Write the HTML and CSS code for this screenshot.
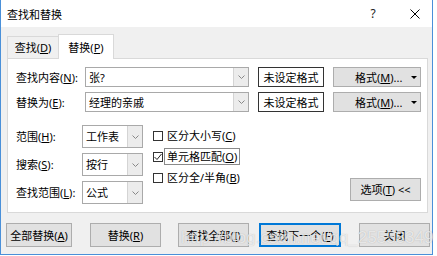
FILE: index.html
```html
<!DOCTYPE html>
<html lang="zh-CN">
<head>
    <meta charset="UTF-8">
    <meta name="viewport" content="width=device-width, initial-scale=1.0">
    <title>查找和替换</title>
    <link rel="stylesheet" href="styles.css">
</head>
<body>
    <div class="window">
        <div class="titlebar">
            <span class="title">查找和替换</span>
            <span class="help">?</span>
            <span class="close">
                <svg width="10" height="10" viewBox="0 0 10 10"><path d="M0.5 0.5 L9.5 9.5 M9.5 0.5 L0.5 9.5" stroke="#000" stroke-width="1"/></svg>
            </span>
        </div>
        <div class="client">
            <div class="tabs">
                <div class="tab">查找(<u>D</u>)</div>
                <div class="tab active">替换(<u>P</u>)</div>
            </div>
            <div class="panel">
                <div class="find-grid">
                    <label class="lbl">查找内容(<u>N</u>):</label>
                    <div class="combo"><span class="val">张?</span><span class="drop"><svg width="7" height="4" viewBox="0 0 7 4"><path d="M0.5 0.5 L3.5 3.5 L6.5 0.5" fill="none" stroke="#888"/></svg></span></div>
                    <div class="fmt-box">未设定格式</div>
                    <button class="btn fmt">格式(<u>M</u>)...<span class="tri"></span></button>

                    <label class="lbl">替换为(<u>E</u>):</label>
                    <div class="combo"><span class="val">经理的亲戚</span><span class="drop"><svg width="7" height="4" viewBox="0 0 7 4"><path d="M0.5 0.5 L3.5 3.5 L6.5 0.5" fill="none" stroke="#888"/></svg></span></div>
                    <div class="fmt-box">未设定格式</div>
                    <button class="btn fmt">格式(<u>M</u>)...<span class="tri"></span></button>
                </div>

                <div class="options">
                    <div class="opt-grid">
                        <label class="lbl">范围(<u>H</u>):</label>
                        <div class="combo"><span class="val">工作表</span><span class="drop"><svg width="7" height="4" viewBox="0 0 7 4"><path d="M0.5 0.5 L3.5 3.5 L6.5 0.5" fill="none" stroke="#888"/></svg></span></div>
                        <label class="lbl">搜索(<u>S</u>):</label>
                        <div class="combo"><span class="val">按行</span><span class="drop"><svg width="7" height="4" viewBox="0 0 7 4"><path d="M0.5 0.5 L3.5 3.5 L6.5 0.5" fill="none" stroke="#888"/></svg></span></div>
                        <label class="lbl">查找范围(<u>L</u>):</label>
                        <div class="combo"><span class="val">公式</span><span class="drop"><svg width="7" height="4" viewBox="0 0 7 4"><path d="M0.5 0.5 L3.5 3.5 L6.5 0.5" fill="none" stroke="#888"/></svg></span></div>
                    </div>
                    <div class="checks">
                        <div class="check"><span class="box"></span><span class="txt">区分大小写(<u>C</u>)</span></div>
                        <div class="check"><span class="box"><svg width="8" height="8" viewBox="0 0 8 8"><path d="M0.5 4 L3 6.5 L7.5 1" fill="none" stroke="#222" stroke-width="1"/></svg></span><span class="txt focus">单元格匹配(<u>O</u>)</span></div>
                        <div class="check"><span class="box"></span><span class="txt">区分全/半角(<u>B</u>)</span></div>
                    </div>
                    <button class="btn opt-btn">选项(<u>T</u>) &lt;&lt;</button>
                </div>
            </div>

            <div class="actions">
                <button class="btn w66">全部替换(<u>A</u>)</button>
                <button class="btn w71 ml18">替换(<u>R</u>)</button>
                <button class="btn w71 ml17">查找全部(<u>I</u>)</button>
                <button class="btn w82 ml10 default">查找下一个(<u>F</u>)</button>
                <button class="btn w71 ml18">关闭</button>
            </div>
            <div class="watermark">http://blog.csdn.net/qq_25558349</div>
        </div>
    </div>
</body>
</html>
```

FILE: styles.css
```css
body {
    margin: 0;
    background: #fff;
    font-family: "Noto Sans", "Noto Sans CJK SC", sans-serif;
    font-size: 11px;
    color: #000;
}

.window {
    width: 433px;
    height: 255px;
    box-sizing: border-box;
    border: 1px solid #4a90d9;
    border-top: none;
    display: flex;
    flex-direction: column;
}

.titlebar {
    height: 27px;
    display: flex;
    align-items: center;
    padding-left: 6px;
    background: #fff;
}

.help {
    margin-left: auto;
    width: 20px;
    text-align: center;
    font-size: 12px;
    color: #222;
}

.close {
    margin-left: 27px;
    margin-right: 12px;
    width: 10px;
    height: 10px;
    display: flex;
}

.client {
    position: relative;
    flex: 1;
    background: #f0f0f0;
}

.tabs {
    display: flex;
    align-items: flex-end;
    padding: 7px 0 0 6px;
    height: 24px;
}

.tab {
    height: 22px;
    box-sizing: border-box;
    border: 1px solid #d9d9d9;
    border-bottom: none;
    width: 52px;
    display: flex;
    align-items: center;
    justify-content: center;
    line-height: 1;
}

.tab.active {
    height: 25px;
    width: 56px;
    margin-bottom: -1px;
    margin-left: -1px;
    background: #fff;
    position: relative;
    z-index: 1;
}

.panel {
    margin: 0 4px 0 6px;
    height: 155px;
    box-sizing: border-box;
    background: #fff;
    border: 1px solid #d9d9d9;
    padding: 8px 0 0 8px;
}

.find-grid {
    display: grid;
    grid-template-columns: 60px 164px 66px 88px;
    grid-auto-rows: 20px;
    column-gap: 9px;
    row-gap: 5px;
    align-items: center;
}

.lbl {
    line-height: 1;
    white-space: nowrap;
}

.combo {
    height: 100%;
    box-sizing: border-box;
    border: 1px solid #a9a9a9;
    display: flex;
    align-items: center;
    background: #fff;
}

.combo .val {
    flex: 1;
    padding-left: 3px;
    line-height: 1;
}

.combo .drop {
    width: 15px;
    height: 100%;
    box-sizing: border-box;
    border-left: 1px solid #d4d4d4;
    background: #ececec;
    display: flex;
    align-items: center;
    justify-content: center;
}

.fmt-box {
    height: 100%;
    box-sizing: border-box;
    border: 1px solid #333;
    display: flex;
    align-items: center;
    justify-content: center;
    line-height: 1;
}

.btn {
    font: inherit;
    color: #000;
    background: #e1e1e1;
    border: 1px solid #adadad;
    padding: 0;
    height: 24px;
    line-height: 1;
}

.fmt {
    height: 100%;
    display: flex;
    align-items: center;
    padding: 0 3px 0 21px;
}

.tri {
    margin-left: auto;
    width: 0;
    height: 0;
    border-left: 3px solid transparent;
    border-right: 3px solid transparent;
    border-top: 3px solid #000;
}

.options {
    display: flex;
    margin-top: 13px;
}

.opt-grid {
    display: grid;
    grid-template-columns: 66px 61px;
    grid-auto-rows: 23px;
    row-gap: 5px;
    align-items: center;
}

.checks {
    margin-left: 10px;
    display: flex;
    flex-direction: column;
}

.check {
    height: 21px;
    display: flex;
    align-items: center;
}

.box {
    width: 10px;
    height: 10px;
    box-sizing: border-box;
    border: 1px solid #333;
    margin-right: 1px;
    display: flex;
    align-items: center;
    justify-content: center;
}

.txt {
    padding: 2px 2px;
    border: 1px solid transparent;
    line-height: 1;
}

.txt.focus {
    border-color: #8a8a8a;
}

.opt-btn {
    margin-left: auto;
    margin-right: 6px;
    align-self: flex-end;
    margin-bottom: 3px;
    width: 71px;
    height: 23px;
}

.actions {
    display: flex;
    margin-top: 10px;
    padding-left: 5px;
}

.w66 { width: 66px; }
.w71 { width: 71px; }
.w82 { width: 82px; }
.ml10 { margin-left: 10px; }
.ml17 { margin-left: 17px; }
.ml18 { margin-left: 18px; }

.default {
    border-color: #0078d7;
    box-shadow: inset 0 0 0 1px #0078d7;
}

.watermark {
    position: absolute;
    left: 180px;
    top: 201px;
    font-family: "Liberation Sans", sans-serif;
    font-size: 17px;
    color: rgba(255, 255, 255, 0.7);
    text-shadow: 0 0 1px rgba(0, 0, 0, 0.25);
    white-space: nowrap;
    pointer-events: none;
}
```
